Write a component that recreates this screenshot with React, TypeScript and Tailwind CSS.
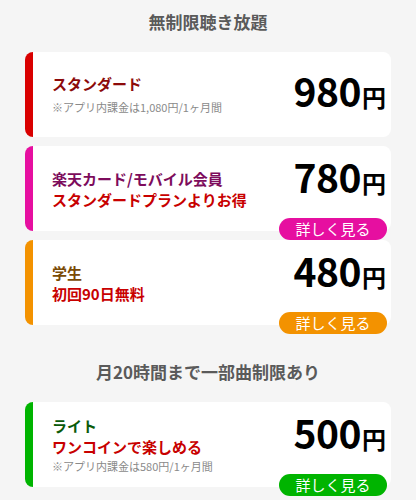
import React from "react";

type Plan = {
  name: string;
  nameColor: string;
  border: string;
  btn?: string;
  sub?: string;
  note?: string;
  price: string;
};

const FONT = "font-['Noto_Sans_CJK_JP','Noto_Sans',sans-serif]";

const UNLIMITED: Plan[] = [
  {
    name: "スタンダード",
    nameColor: "text-[#8c0a0a]",
    border: "border-[#d90000]",
    note: "※アプリ内課金は1,080円/1ヶ月間",
    price: "980",
  },
  {
    name: "楽天カード/モバイル会員",
    nameColor: "text-[#7d0c5c]",
    border: "border-[#e60fa0]",
    btn: "bg-[#e60fa0]",
    sub: "スタンダードプランよりお得",
    price: "780",
  },
  {
    name: "学生",
    nameColor: "text-[#7a4a05]",
    border: "border-[#f39200]",
    btn: "bg-[#f39200]",
    sub: "初回90日無料",
    price: "480",
  },
];

const LIMITED: Plan[] = [
  {
    name: "ライト",
    nameColor: "text-[#0a5a0a]",
    border: "border-[#00b400]",
    btn: "bg-[#00b400]",
    sub: "ワンコインで楽しめる",
    note: "※アプリ内課金は580円/1ヶ月間",
    price: "500",
  },
];

function PlanCard({ plan }: { plan: Plan }) {
  return (
    <div
      className={`flex h-[85px] rounded-lg border-l-[8px] bg-white ${plan.border}`}
    >
      <div className="flex flex-1 flex-col justify-center pl-[19px]">
        <div className={`text-[15px] font-bold leading-[21px] ${plan.nameColor}`}>
          {plan.name}
        </div>
        {plan.sub && (
          <div className="text-[15px] font-bold leading-[21px] text-[#c80000]">
            {plan.sub}
          </div>
        )}
        {plan.note && (
          <div
            className={`text-[11px] leading-[18px] text-[#8a8a8a] ${
              plan.sub ? "" : "mt-[4px]"
            }`}
          >
            {plan.note}
          </div>
        )}
      </div>
      <div
        className={`flex flex-col items-end pr-[4px] ${
          plan.btn ? "pt-[10px]" : "justify-center"
        }`}
      >
        <div className="pr-[1px] leading-[40px] font-bold text-black">
          <span className="text-[39px] tracking-[-0.5px]">{plan.price}</span>
          <span className="ml-[1px] text-[24px]">円</span>
        </div>
        {plan.btn && (
          <button
            className={`mt-[12px] h-[22px] w-[108px] rounded-full text-[15px] leading-[22px] text-white ${plan.btn}`}
          >
            詳しく見る
          </button>
        )}
      </div>
    </div>
  );
}

export default function App() {
  return (
    <div className={`min-h-[500px] bg-[#f5f5f5] px-[25px] pb-6 ${FONT}`}>
      <h2 className="pt-[10px] text-center text-[17px] font-bold leading-[24px] text-[#5a5a5a]">
        無制限聴き放題
      </h2>
      <div className="mt-[18px] flex flex-col gap-[9px]">
        {UNLIMITED.map((p) => (
          <PlanCard key={p.name} plan={p} />
        ))}
      </div>
      <h2 className="mt-[35px] text-center text-[17px] font-bold leading-[24px] text-[#5a5a5a]">
        月20時間まで一部曲制限あり
      </h2>
      <div className="mt-[18px] flex flex-col gap-[9px]">
        {LIMITED.map((p) => (
          <PlanCard key={p.name} plan={p} />
        ))}
      </div>
    </div>
  );
}
